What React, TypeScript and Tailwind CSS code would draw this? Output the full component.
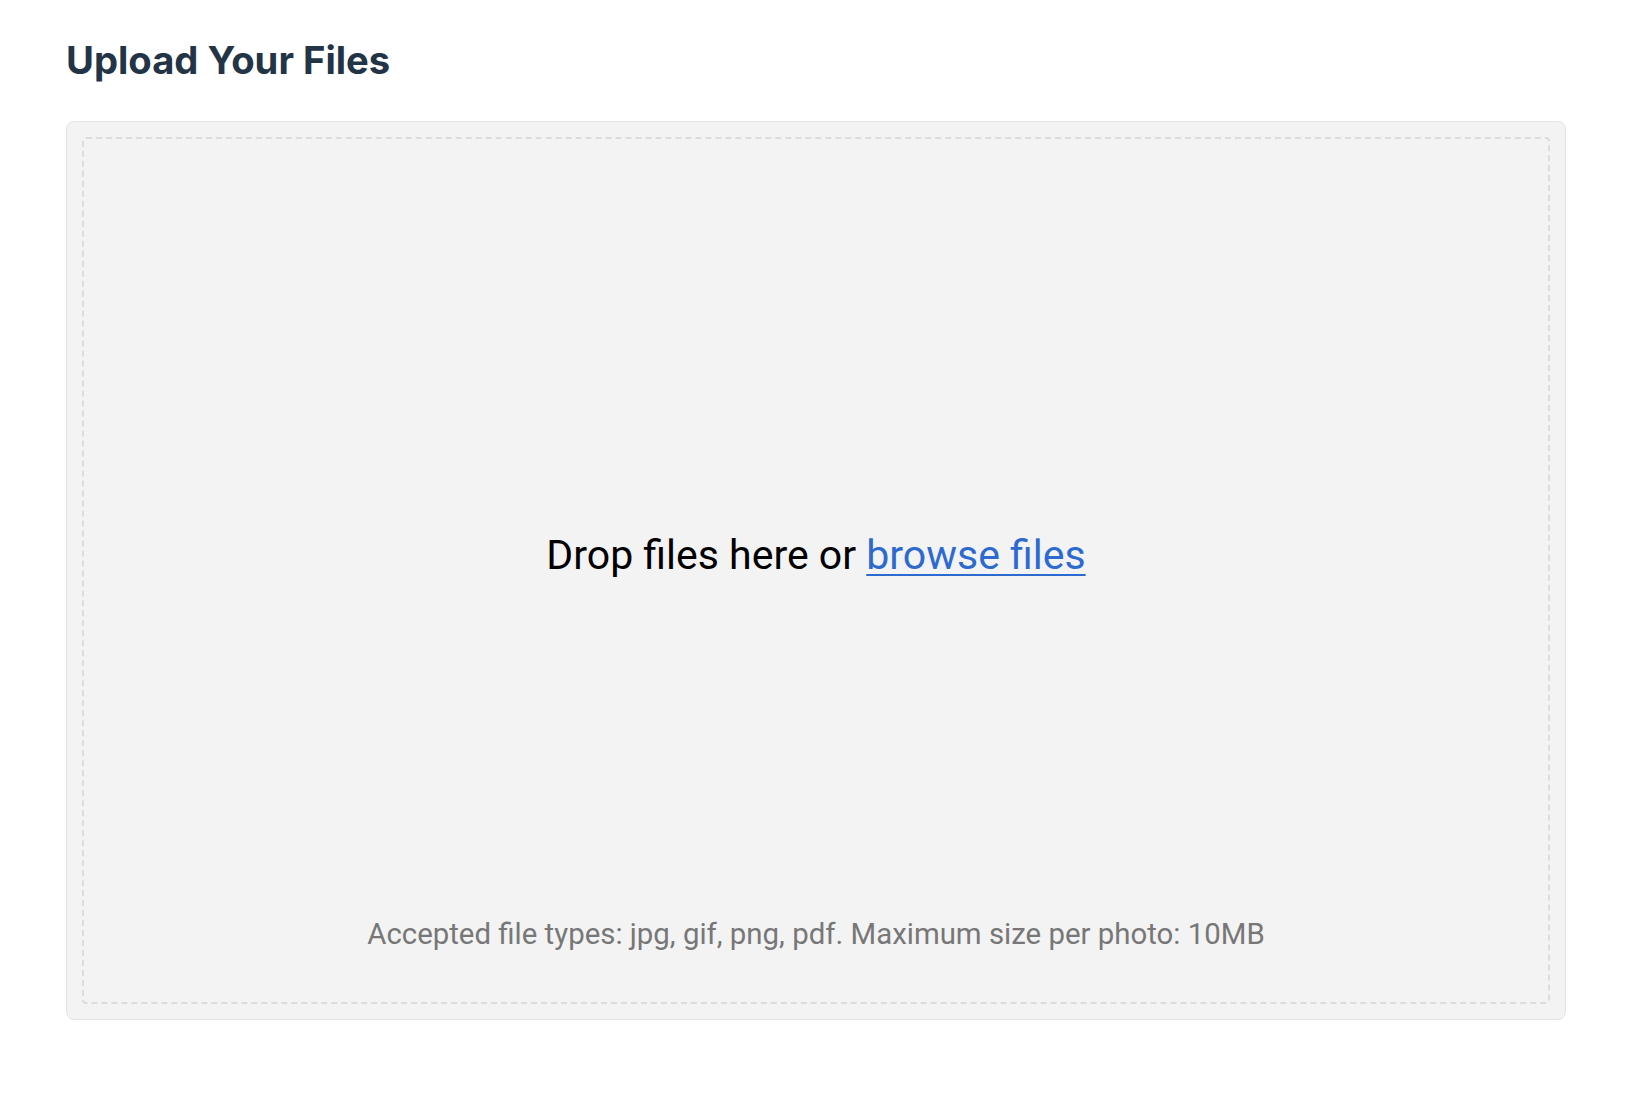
export default function App() {
  return (
    <div className="min-h-screen bg-white pl-[66px] pr-[60px] pt-[37px]" style={{ fontFamily: 'Roboto, "Liberation Sans", sans-serif' }}>
      <h1 className="text-[38.2px] leading-[46px] font-bold text-[#243447]" style={{ fontFamily: 'Inter, "Liberation Sans", sans-serif' }}>
        Upload Your Files
      </h1>
      <div className="mt-[38px] h-[899px] rounded-[8px] border border-[#e4e4e4] bg-[#f3f3f3] p-[15px] flex">
        <div className="flex-1 rounded-[4px] border-2 border-dashed border-[#dcdcdc] flex flex-col items-center pt-[392px]">
          <p className="text-[41px] leading-[48px] text-black">
            Drop files here or{' '}
            <a href="#" className="text-[#2d6ad0] underline decoration-2 underline-offset-[5px]">
              browse files
            </a>
          </p>
          <p className="mt-[337px] text-[29.4px] leading-[36px] text-[#777777]">
            Accepted file types: jpg, gif, png, pdf. Maximum size per photo: 10MB
          </p>
        </div>
      </div>
    </div>
  );
}
